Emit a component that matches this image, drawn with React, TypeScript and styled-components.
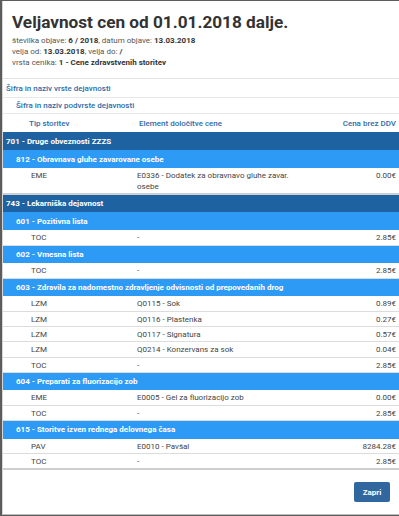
import React from "react";
import styled, { createGlobalStyle } from "styled-components";

const Global = createGlobalStyle`
  html, body { margin: 0; padding: 0; background: #fff; }
  body { font-family: Roboto, "Liberation Sans", Arial, sans-serif; color: #333; }
  * { box-sizing: border-box; }
`;

const Frame = styled.div`
  width: 399px;
  height: 516px;
  background: #5c5c5c;
  padding: 1px 0 1px 2px;
  overflow: hidden;
`;

const Modal = styled.div`
  height: 514px;
  background: #fff;
  border-left: 1px solid #d6d6d6;
  border-bottom: 1px solid #bdbdbd;
  display: flex;
  flex-direction: column;
`;

const Header = styled.div`
  padding: 9px 9px 10px 9px;
  border-bottom: 1px solid #e2e2e2;
`;

const Title = styled.h1`
  margin: 0 0 1px 0;
  font-size: 17.2px;
  font-weight: 700;
  color: #333;
  line-height: 24px;
`;

const Meta = styled.div`
  font-size: 8px;
  line-height: 11px;
  color: #555;
  b { color: #333; font-weight: 700; }
`;

const LinkRow = styled.div<{ $indent: number; $h: number }>`
  height: ${(p) => p.$h}px;
  display: flex;
  align-items: center;
  padding-left: ${(p) => p.$indent}px;
  border-bottom: 1px solid #e8e8e8;
  font-size: 8px;
  font-weight: 500;
  color: #2d6ca8;
`;

const Table = styled.table`
  width: 100%;
  border-collapse: collapse;
  font-size: 8px;
`;

const Th = styled.th<{ $right?: boolean; $pad: number }>`
  height: 18px;
  text-align: ${(p) => (p.$right ? "right" : "left")};
  padding: 0 ${(p) => (p.$right ? 3 : 0)}px 0 ${(p) => p.$pad}px;
  font-size: 8px;
  font-weight: 500;
  color: #2d6ca8;
  vertical-align: middle;
`;

const GroupRow = styled.tr<{ $level: number }>`
  background: ${(p) => (p.$level === 0 ? "#1f62a2" : "#2d9af6")};
  color: #fff;
  td {
    height: 18px;
    padding: 0 0 0 ${(p) => (p.$level === 0 ? 3 : 13)}px;
    font-size: 8px;
    font-weight: 700;
    vertical-align: middle;
  }
`;

const DataRow = styled.tr`
  td {
    height: 15.2px;
    border-bottom: 1px solid #dcdcdc;
    color: #444;
    vertical-align: top;
    padding-top: 2px;
    padding-bottom: 1px;
    line-height: 11px;
  }
  &:last-child td { border-bottom: 2px solid #cfcfcf; }
`;

const TypeCell = styled.td`
  padding-left: 28px;
  width: 133px;
`;

const ElemCell = styled.td`
  padding-right: 40px;
`;

const PriceCell = styled.td`
  text-align: right;
  padding-right: 3px;
  width: 60px;
`;

const Footer = styled.div`
  flex: 1;
  display: flex;
  justify-content: flex-end;
  align-items: flex-start;
  padding: 12px 9px 0 0;
`;

const Button = styled.button`
  width: 36px;
  height: 20px;
  border: none;
  border-radius: 2px;
  background: #30679e;
  color: #fff;
  font-family: inherit;
  font-size: 8px;
  font-weight: 700;
  padding: 0;
`;

type Item = [string, string, string];
type Sub = { name: string; items: Item[] };
type Group = { name: string; subs: Sub[] };

const data: Group[] = [
  {
    name: "701 - Druge obveznosti ZZZS",
    subs: [
      {
        name: "812 - Obravnava gluhe zavarovane osebe",
        items: [["EME", "E0336 - Dodatek za obravnavo gluhe zavar. osebe", "0.00€"]],
      },
    ],
  },
  {
    name: "743 - Lekarniška dejavnost",
    subs: [
      { name: "601 - Pozitivna lista", items: [["TOC", "-", "2.85€"]] },
      { name: "602 - Vmesna lista", items: [["TOC", "-", "2.85€"]] },
      {
        name: "603 - Zdravila za nadomestno zdravljenje odvisnosti od prepovedanih drog",
        items: [
          ["LZM", "Q0115 - Sok", "0.89€"],
          ["LZM", "Q0116 - Plastenka", "0.27€"],
          ["LZM", "Q0117 - Signatura", "0.57€"],
          ["LZM", "Q0214 - Konzervans za sok", "0.04€"],
          ["TOC", "-", "2.85€"],
        ],
      },
      {
        name: "604 - Preparati za fluorizacijo zob",
        items: [
          ["EME", "E0005 - Gel za fluorizacijo zob", "0.00€"],
          ["TOC", "-", "2.85€"],
        ],
      },
      {
        name: "615 - Storitve izven rednega delovnega časa",
        items: [
          ["PAV", "E0010 - Pavšal", "8284.28€"],
          ["TOC", "-", "2.85€"],
        ],
      },
    ],
  },
];

export default function App() {
  return (
    <Frame>
      <Global />
      <Modal>
        <Header>
          <Title>Veljavnost cen od 01.01.2018 dalje.</Title>
          <Meta>
            številka objave: <b>6 / 2018</b>, datum objave: <b>13.03.2018</b>
          </Meta>
          <Meta>
            velja od: <b>13.03.2018</b>, velja do: <b>/</b>
          </Meta>
          <Meta>
            vrsta cenika: <b>1 - Cene zdravstvenih storitev</b>
          </Meta>
        </Header>
        <LinkRow $indent={3} $h={19}>Šifra in naziv vrste dejavnosti</LinkRow>
        <LinkRow $indent={13} $h={16}>Šifra in naziv podvrste dejavnosti</LinkRow>
        <Table>
          <thead>
            <tr>
              <Th $pad={26}>Tip storitev</Th>
              <Th $pad={3}>Element določitve cene</Th>
              <Th $pad={0} $right>
                Cena brez DDV
              </Th>
            </tr>
          </thead>
          {data.map((g) => (
            <tbody key={g.name}>
              <GroupRow $level={0}>
                <td colSpan={3}>{g.name}</td>
              </GroupRow>
              {g.subs.map((s) => (
                <React.Fragment key={s.name}>
                  <GroupRow $level={1}>
                    <td colSpan={3}>{s.name}</td>
                  </GroupRow>
                  {s.items.map((it, i) => (
                    <DataRow key={i}>
                      <TypeCell>{it[0]}</TypeCell>
                      <ElemCell>{it[1]}</ElemCell>
                      <PriceCell>{it[2]}</PriceCell>
                    </DataRow>
                  ))}
                </React.Fragment>
              ))}
            </tbody>
          ))}
        </Table>
        <Footer>
          <Button>Zapri</Button>
        </Footer>
      </Modal>
    </Frame>
  );
}
